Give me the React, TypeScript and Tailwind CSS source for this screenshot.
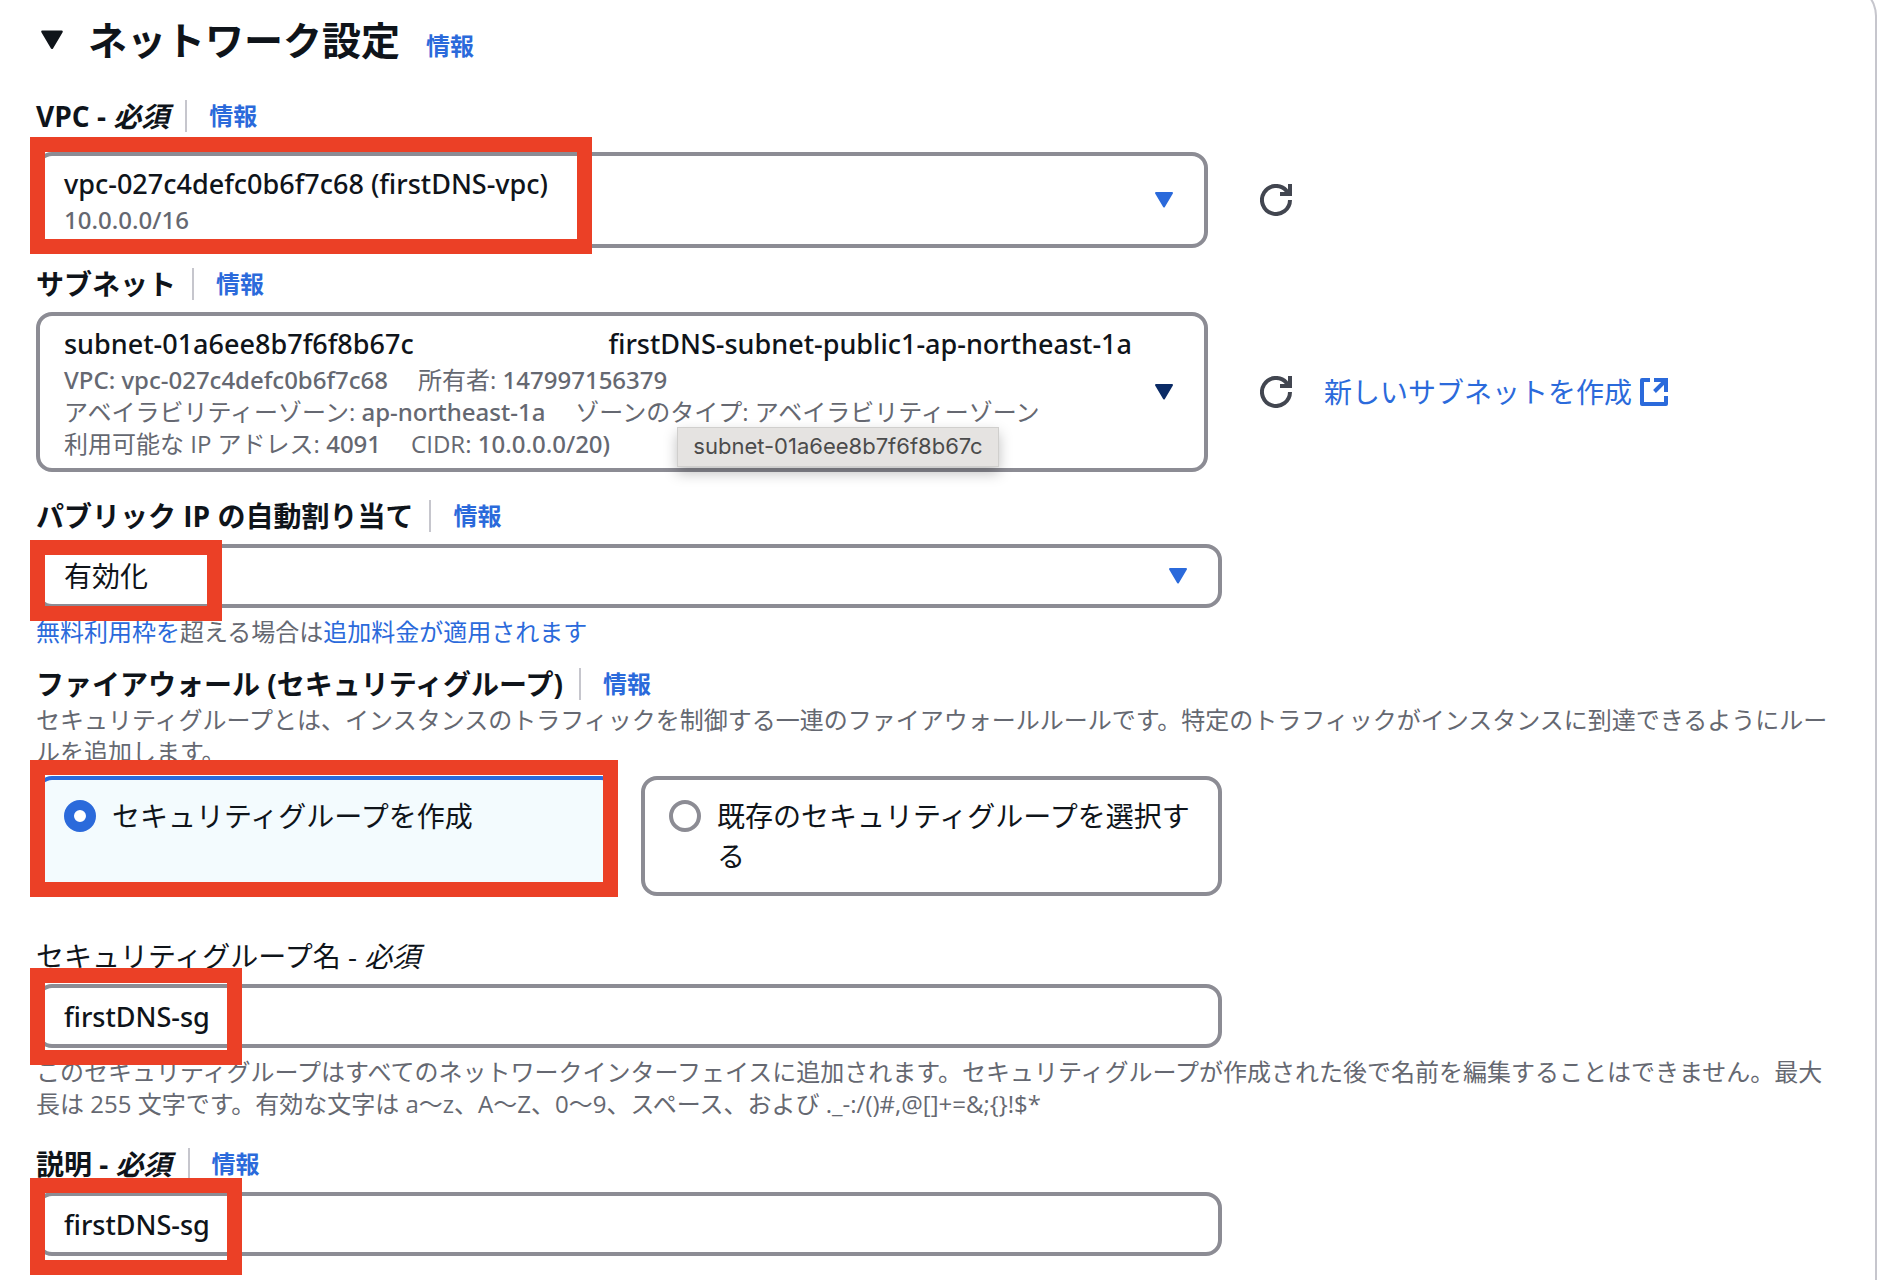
import type { ReactNode } from "react";

const FONT = "font-['Open_Sans','Noto_Sans_CJK_JP',sans-serif]";

const NAME_HINT =
  "このセキュリティグループはすべてのネットワークインターフェイスに追加されます。セキュリティグループが作成された後で名前を編集することはできません。最大長は 255 文字です。有効な文字は a～z、A～Z、0～9、スペース、および ._-:/()#,@[]+=&;{}!$*";

function Info({ className = "" }: { className?: string }) {
  return (
    <a href="#info" className={`text-2xl leading-8 font-bold text-[#2b6adb] ${className}`}>
      情報
    </a>
  );
}

function Code({ children }: { children: ReactNode }) {
  return <span className="font-['Noto_Sans',sans-serif] font-medium">{children}</span>;
}

function Caret({ className }: { className: string }) {
  return (
    <svg viewBox="0 0 20 16" aria-hidden="true" className={className}>
      <path d="M2 1h16L10 14.5z" fill="currentColor" stroke="currentColor" strokeWidth="2" strokeLinejoin="round" />
    </svg>
  );
}

function LabelRow({ children, info = true }: { children: ReactNode; info?: boolean }) {
  return (
    <div className="flex h-10 items-center">
      {children}
      {info && (
        <>
          <span className="mr-[22px] ml-4 h-8 w-0.5 bg-[#c6c6cd]" />
          <Info />
        </>
      )}
    </div>
  );
}

function Highlight({ className }: { className: string }) {
  return <span aria-hidden="true" className={`pointer-events-none absolute -left-1.5 border-[15px] border-[#eb4026] ${className}`} />;
}

function RefreshButton({ label }: { label: string }) {
  return (
    <button type="button" aria-label={label} className="ml-[52px] shrink-0 text-[#424650]">
      <svg viewBox="0 0 32 32" className="size-8" fill="none" stroke="currentColor" strokeWidth="4" aria-hidden="true">
        <path d="M30 16a14 14 0 1 1-3.6-9.4L30 10" />
        <path d="M30 0v10H20" />
      </svg>
    </button>
  );
}

const labelText = "text-[28px] leading-10 font-bold whitespace-nowrap";
const valueText = "text-[27px] leading-10 font-medium font-['Noto_Sans','Noto_Sans_CJK_JP',sans-serif]";
const box = "rounded-2xl border-4 border-[#8c8c94] bg-white";
const hint = "text-2xl leading-8 text-[#656871]";

export default function App() {
  return (
    <div className={`min-h-screen overflow-hidden bg-white pr-[5px] text-[#0f141a] flex flex-col ${FONT}`}>
      <section className="-mt-4 flex-1 rounded-tr-[32px] border-t-2 border-r-2 border-[#c6c6cd] pt-[30px] pr-[38px] pb-6 pl-9">
        <header className="flex h-12 items-baseline">
          <button type="button" aria-label="ネットワーク設定を折りたたむ" className="ml-1 self-center">
            <Caret className="h-5 w-6" />
          </button>
          <h2 className="ml-6 text-[39px] leading-[48px] font-bold">ネットワーク設定</h2>
          <Info className="ml-[26px]" />
        </header>

        <div className="mt-8">
          <LabelRow>
            <span id="vpc-label" className={labelText}>
              VPC - <em>必須</em>
            </span>
          </LabelRow>
          <div className="mt-4 flex items-center">
            <div className="relative w-full max-w-[1172px]">
              <button type="button" aria-haspopup="listbox" aria-labelledby="vpc-label" className={`flex w-full items-center justify-between py-2 pr-[30px] pl-6 text-left ${box}`}>
                <span>
                  <span className={`block ${valueText}`}>vpc-027c4defc0b6f7c68 (firstDNS-vpc)</span>
                  <span className={`flex ${hint}`}><Code>10.0.0.0/16</Code></span>
                </span>
                <Caret className="h-4 w-5 text-[#2b6adb]" />
              </button>
              <Highlight className="-top-[15px] h-[117px] w-[562px]" />
            </div>
            <RefreshButton label="VPC を更新" />
          </div>
        </div>

        <div className="mt-4">
          <LabelRow>
            <span id="subnet-label" className={labelText}>サブネット</span>
          </LabelRow>
          <div className="mt-2 flex items-center">
            <div className="relative w-full max-w-[1172px]">
              <button type="button" aria-haspopup="listbox" aria-labelledby="subnet-label" className={`flex w-full items-center justify-between py-2 pr-[30px] pl-6 text-left ${box}`}>
                <span className="flex-1">
                  <span className={`flex justify-between pr-[22px] ${valueText}`}>
                    <span>subnet-01a6ee8b7f6f8b67c</span>
                    <span>firstDNS-subnet-public1-ap-northeast-1a</span>
                  </span>
                  <span className={`flex h-8 gap-[30px] ${hint}`}>
                    <Code>VPC: vpc-027c4defc0b6f7c68</Code>
                    <span>所有者: <Code>147997156379</Code></span>
                  </span>
                  <span className={`flex h-8 gap-[30px] ${hint}`}>
                    <span>アベイラビリティーゾーン: <Code>ap-northeast-1a</Code></span>
                    <span>ゾーンのタイプ: アベイラビリティーゾーン</span>
                  </span>
                  <span className={`flex h-8 gap-[30px] ${hint}`}>
                    <span>利用可能な IP アドレス: <Code>4091</Code></span>
                    <span>CIDR: <Code>10.0.0.0/20)</Code></span>
                  </span>
                </span>
                <Caret className="h-4 w-5 text-[#0b2b66]" />
              </button>
              <div role="tooltip" className="absolute top-[115px] left-[641px] h-10 w-[322px] border border-[#d0cfcd] bg-[#e5e3e1] text-center font-['Inter',sans-serif] text-[22px] leading-9 whitespace-nowrap text-[#4b4b4b] shadow-[0_6px_14px_rgba(0,0,0,0.25)]">
                subnet-01a6ee8b7f6f8b67c
              </div>
            </div>
            <RefreshButton label="サブネットを更新" />
            <a href="#create-subnet" className="ml-8 flex shrink-0 items-center gap-2 text-[28px] leading-10 text-[#2b6adb]">
              新しいサブネットを作成
              <svg viewBox="0 0 28 28" className="size-7" fill="none" stroke="currentColor" strokeWidth="4" aria-hidden="true">
                <path d="M10 2H2v24h24v-8" strokeLinejoin="round" />
                <path d="M14 2h12v12M26 2 14.5 13.5" />
              </svg>
            </a>
          </div>
        </div>

        <div className="mt-6">
          <LabelRow>
            <label htmlFor="public-ip" className={labelText}>パブリック IP の自動割り当て</label>
          </LabelRow>
          <div className="relative mt-2 max-w-[1186px]">
            <select id="public-ip" className={`block h-16 w-full appearance-none px-6 text-[28px] ${box}`}>
              <option>有効化</option>
              <option>無効化</option>
            </select>
            <Caret className="pointer-events-none absolute top-6 right-[34px] h-4 w-5 text-[#2b6adb]" />
            <Highlight className="-top-1 h-[81px] w-48" />
          </div>
          <p className={`mt-2 ${hint}`}>
            <a href="#free-tier" className="text-[#2b6adb]">無料利用枠を</a>超える場合は<a href="#charges" className="text-[#2b6adb]">追加料金が適用されます</a>
          </p>
        </div>

        <fieldset className="mt-4">
          <LabelRow>
            <span className={labelText}>ファイアウォール (セキュリティグループ)</span>
          </LabelRow>
          <p className={hint}>
            セキュリティグループとは、インスタンスのトラフィックを制御する一連のファイアウォールルールです。特定のトラフィックがインスタンスに到達できるようにルールを追加します。
          </p>
          <div className="relative mt-2 grid max-w-[1186px] grid-cols-2 gap-6 text-[28px] leading-10">
            <label className="flex items-start gap-4 rounded-2xl border-4 border-[#2b6adb] bg-[#f3fbfe] px-6 py-4">
              <input type="radio" name="sg" defaultChecked className="mt-1 size-8 shrink-0 appearance-none rounded-full border-4 border-[#8c8c94] bg-white checked:border-[10px] checked:border-[#2b6adb]" />
              セキュリティグループを作成
            </label>
            <label className="flex items-start gap-4 rounded-2xl border-4 border-[#8c8c94] px-6 py-4">
              <input type="radio" name="sg" className="mt-1 size-8 shrink-0 appearance-none rounded-full border-4 border-[#8c8c94] bg-white checked:border-[10px] checked:border-[#2b6adb]" />
              既存のセキュリティグループを選択する
            </label>
            <Highlight className="-top-4 h-[137px] w-[588px]" />
          </div>
        </fieldset>

        <div className="mt-10">
          <LabelRow info={false}>
            <label htmlFor="sg-name" className="text-[28px] leading-10">
              セキュリティグループ名 - <em>必須</em>
            </label>
          </LabelRow>
          <div className="relative mt-2 max-w-[1186px]">
            <input id="sg-name" type="text" defaultValue="firstDNS-sg" className={`block h-16 w-full px-6 ${valueText} ${box}`} />
            <Highlight className="-top-4 h-[97px] w-[212px]" />
          </div>
          <p className={`mt-2 ${hint}`}>{NAME_HINT}</p>
        </div>

        <div className="mt-6">
          <LabelRow>
            <label htmlFor="sg-desc" className={labelText}>
              説明 - <em>必須</em>
            </label>
          </LabelRow>
          <div className="relative mt-2 max-w-[1186px]">
            <input id="sg-desc" type="text" defaultValue="firstDNS-sg" className={`block h-16 w-full px-6 ${valueText} ${box}`} />
            <Highlight className="-top-[14px] h-[97px] w-[212px]" />
          </div>
        </div>
      </section>
    </div>
  );
}
